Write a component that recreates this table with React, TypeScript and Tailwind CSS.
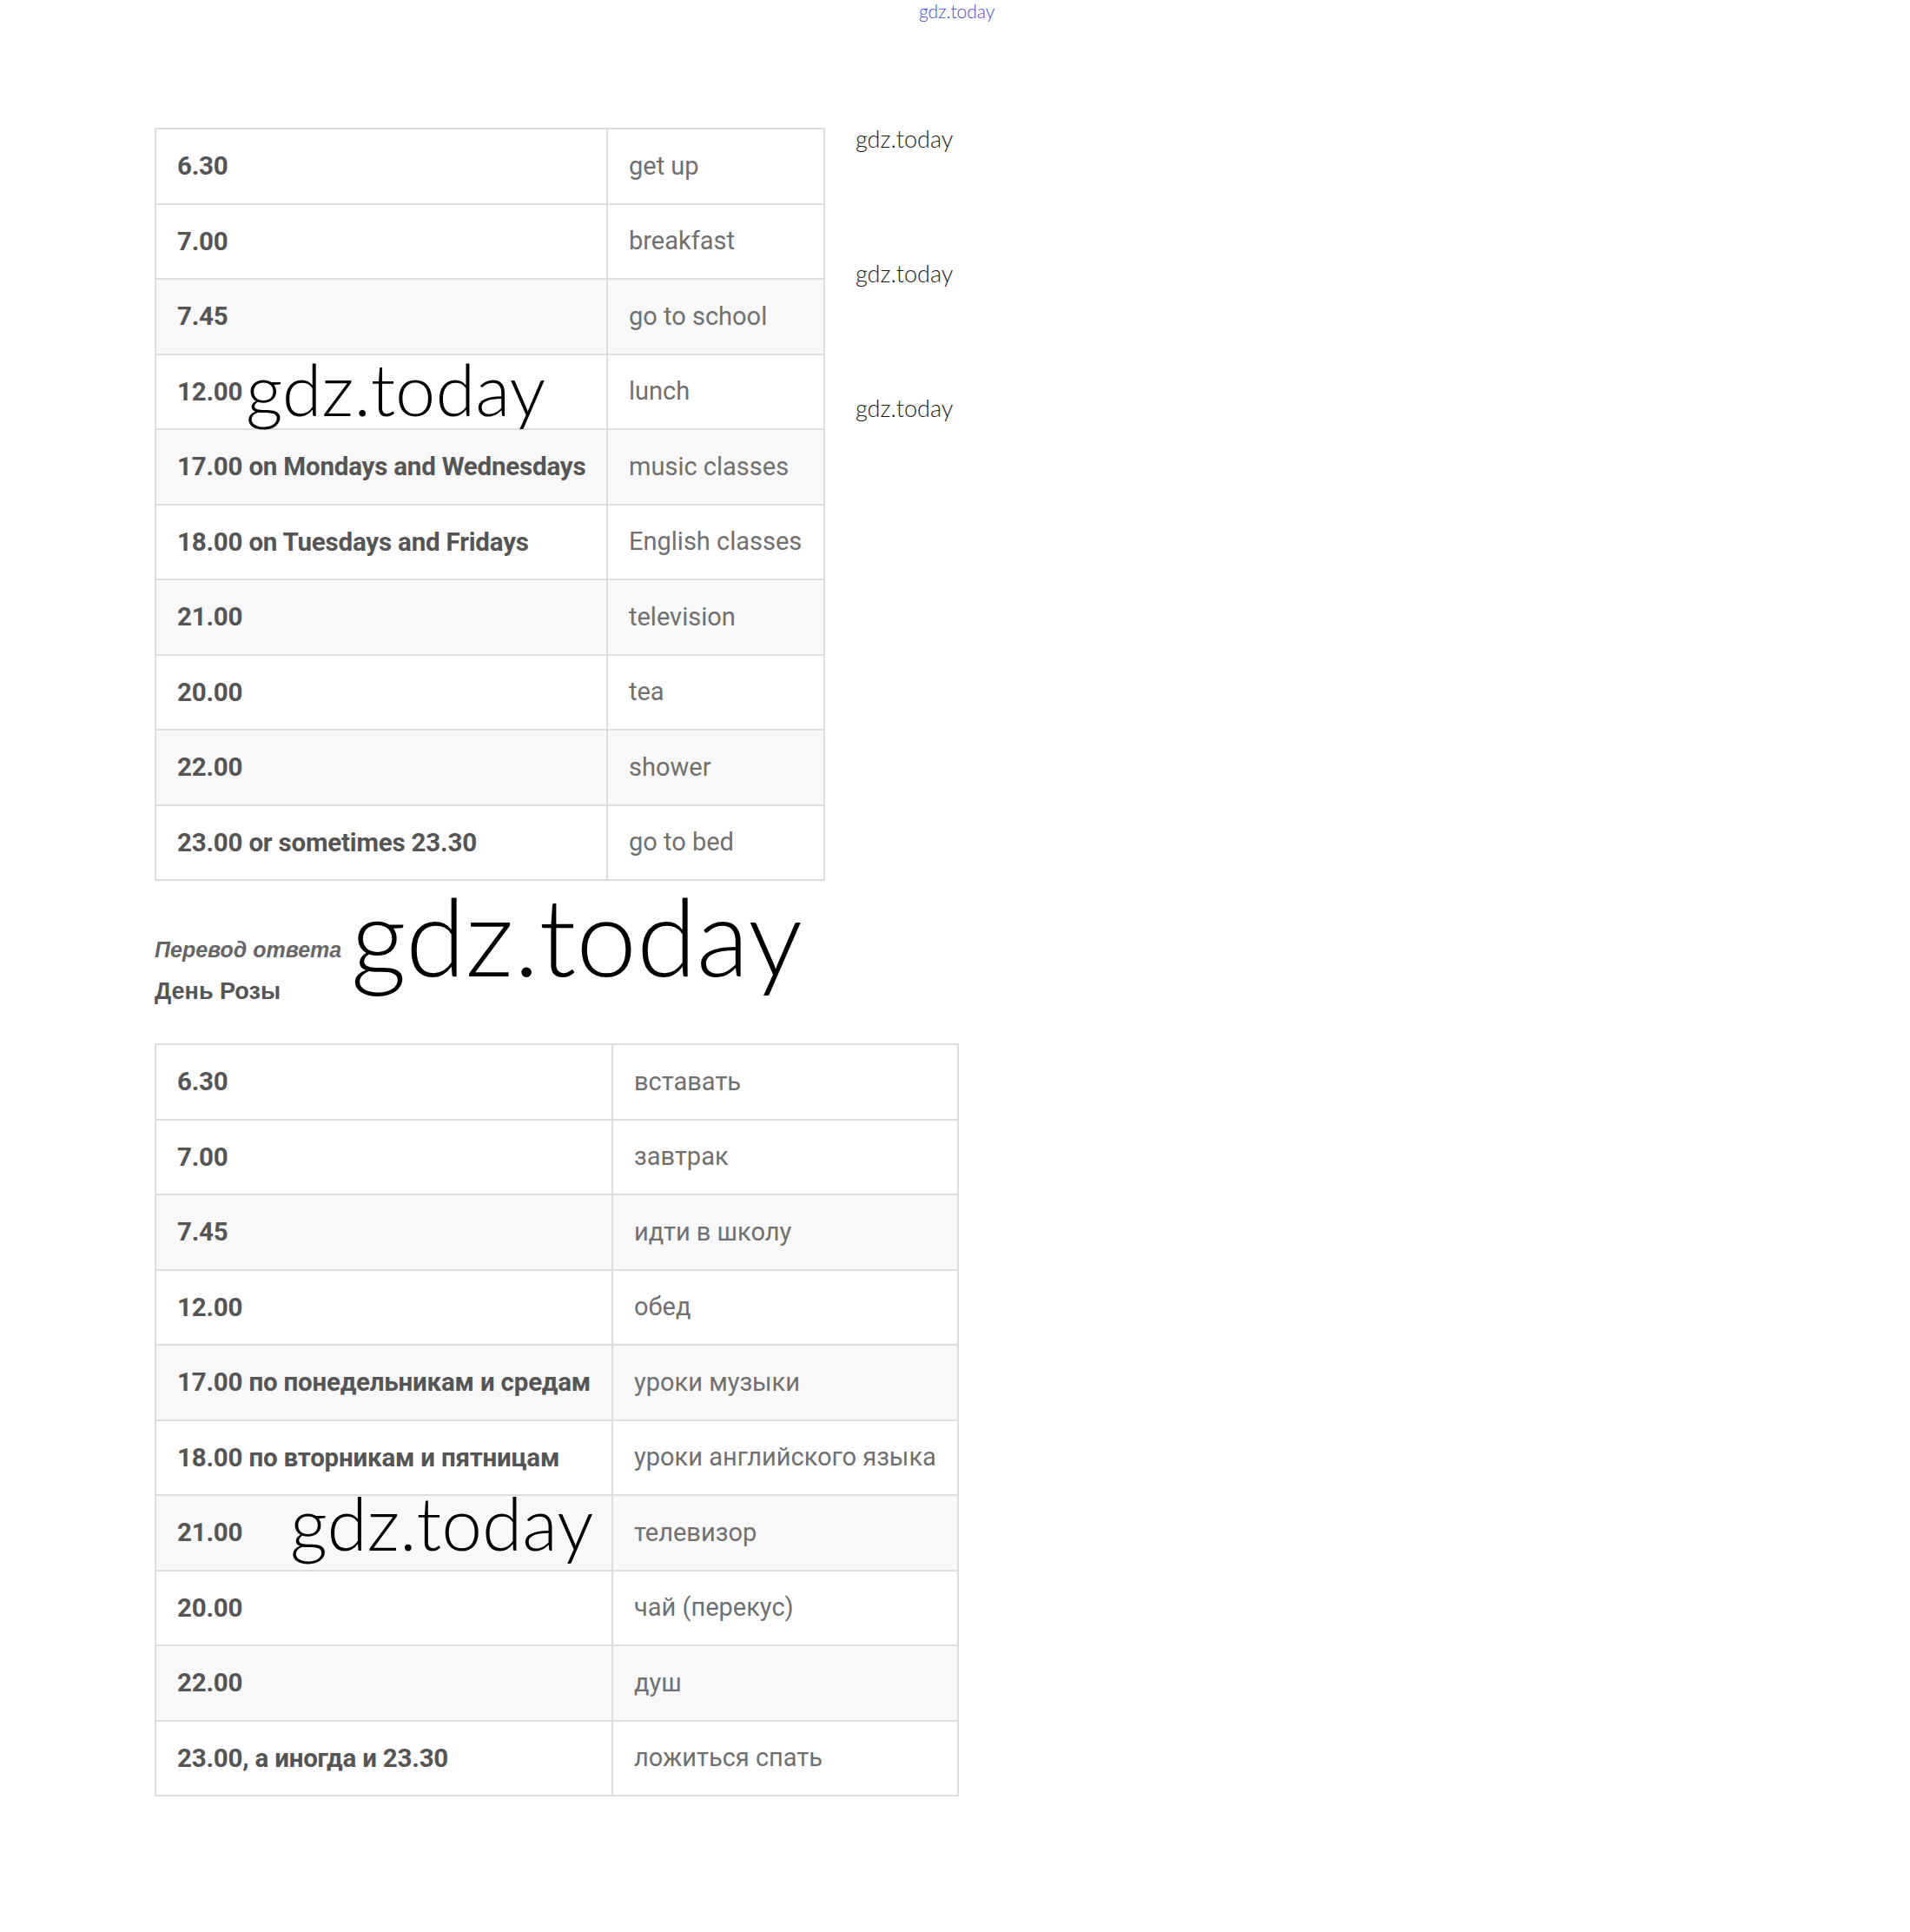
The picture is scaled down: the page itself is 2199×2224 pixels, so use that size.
import React from "react";

const rows1: [string, string][] = [
  ["6.30", "get up"],
  ["7.00", "breakfast"],
  ["7.45", "go to school"],
  ["12.00", "lunch"],
  ["17.00 on Mondays and Wednesdays", "music classes"],
  ["18.00 on Tuesdays and Fridays", "English classes"],
  ["21.00", "television"],
  ["20.00", "tea"],
  ["22.00", "shower"],
  ["23.00 or sometimes 23.30", "go to bed"],
];

const rows2: [string, string][] = [
  ["6.30", "вставать"],
  ["7.00", "завтрак"],
  ["7.45", "идти в школу"],
  ["12.00", "обед"],
  ["17.00 по понедельникам и средам", "уроки музыки"],
  ["18.00 по вторникам и пятницам", "уроки английского языка"],
  ["21.00", "телевизор"],
  ["20.00", "чай (перекус)"],
  ["22.00", "душ"],
  ["23.00, а иногда и 23.30", "ложиться спать"],
];

function Schedule({
  rows,
  w1,
  w2,
}: {
  rows: [string, string][];
  w1: number;
  w2: number;
}) {
  return (
    <table
      className="table-fixed border-collapse border-2 border-[#dddddd] [font-family:Roboto,'Liberation_Sans',sans-serif]"
      style={{ width: w1 + w2 }}
    >
      <colgroup>
        <col style={{ width: w1 }} />
        <col style={{ width: w2 }} />
      </colgroup>
      <tbody>
        {rows.map(([a, b], i) => {
          const gray = i === 2 || i === 4 || i === 6 || i === 8;
          return (
            <tr
              key={i}
              className={gray ? "h-[86.5px] bg-[#f8f8f8]" : "h-[86.5px] bg-white"}
            >
              <td className="border-2 border-[#dddddd] pl-[24px] pr-0 align-middle whitespace-nowrap text-[29.5px] font-bold text-[#555555] tracking-[-0.2px]">
                {a}
              </td>
              <td className="border-2 border-[#dddddd] pl-[24px] pr-0 align-middle whitespace-nowrap text-[29px] font-normal text-[#707070]">
                {b}
              </td>
            </tr>
          );
        })}
      </tbody>
    </table>
  );
}

function Mark({ className }: { className: string }) {
  return (
    <div
      className={
        "absolute leading-none whitespace-nowrap [font-family:Lato,'Noto_Sans',sans-serif] " +
        className
      }
    >
      gdz.today
    </div>
  );
}

export default function App() {
  return (
    <div className="relative w-[2199px] h-[2224px] bg-white overflow-hidden">
      <div className="flex flex-col items-start pl-[178px] pt-[147px]">
        <Schedule rows={rows1} w1={520} w2={250} />
        <div className="mt-[55px] flex flex-col [font-family:'Liberation_Sans',Arial,sans-serif] font-bold">
          <p className="italic text-[25px] leading-[48px] text-[#666666]">Перевод ответа</p>
          <p className="text-[27px] leading-[48px] text-[#555555]">День Розы</p>
        </div>
        <div className="mt-[36px]">
          <Schedule rows={rows2} w1={526} w2={398} />
        </div>
      </div>

      <Mark className="left-[1058px] top-[2px] text-[21px] font-light text-[#4a4ad8]" />
      <Mark className="left-[985px] top-[146px] text-[27px] font-light text-[#1a1a1a]" />
      <Mark className="left-[985px] top-[301px] text-[27px] font-light text-[#1a1a1a]" />
      <Mark className="left-[985px] top-[456px] text-[27px] font-light text-[#1a1a1a]" />
      <Mark className="left-[283px] top-[406px] text-[83px] font-light text-black" />
      <Mark className="left-[404px] top-[1014px] text-[125px] font-light text-black" />
      <Mark className="left-[334px] top-[1711px] text-[84px] font-light text-black" />
    </div>
  );
}
